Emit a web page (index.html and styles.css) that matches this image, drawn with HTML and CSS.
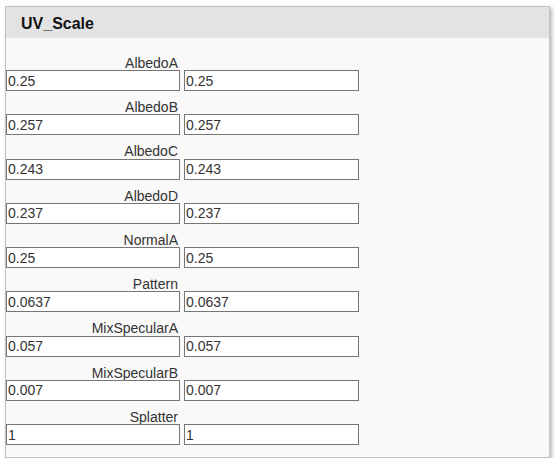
FILE: index.html
```html
<!DOCTYPE html>
<html>
<head>
<meta charset="utf-8">
<link rel="stylesheet" href="styles.css">
</head>
<body>
<div class="panel">
  <div class="panel-header">UV_Scale</div>
  <div class="panel-body">
    <div class="field"><div class="label">AlbedoA</div><div class="inputs"><input class="in1" value="0.25"><input class="in2" value="0.25"></div></div>
    <div class="field"><div class="label">AlbedoB</div><div class="inputs"><input class="in1" value="0.257"><input class="in2" value="0.257"></div></div>
    <div class="field"><div class="label">AlbedoC</div><div class="inputs"><input class="in1" value="0.243"><input class="in2" value="0.243"></div></div>
    <div class="field"><div class="label">AlbedoD</div><div class="inputs"><input class="in1" value="0.237"><input class="in2" value="0.237"></div></div>
    <div class="field"><div class="label">NormalA</div><div class="inputs"><input class="in1" value="0.25"><input class="in2" value="0.25"></div></div>
    <div class="field"><div class="label">Pattern</div><div class="inputs"><input class="in1" value="0.0637"><input class="in2" value="0.0637"></div></div>
    <div class="field"><div class="label">MixSpecularA</div><div class="inputs"><input class="in1" value="0.057"><input class="in2" value="0.057"></div></div>
    <div class="field"><div class="label">MixSpecularB</div><div class="inputs"><input class="in1" value="0.007"><input class="in2" value="0.007"></div></div>
    <div class="field"><div class="label">Splatter</div><div class="inputs"><input class="in1" value="1"><input class="in2" value="1"></div></div>
  </div>
</div>
</body>
</html>
```
FILE: styles.css
```css
html, body {
  margin: 0;
  padding: 0;
  background: #ffffff;
}
body {
  padding: 6px 0 0 5px;
  font-family: "Liberation Sans", Arial, sans-serif;
}
.panel {
  width: 543px;
  height: 450px;
  border: 1px solid #c2c2c2;
  background: #f9f9f9;
  box-shadow: 2px 2px 4px rgba(0, 0, 0, 0.28);
  display: flex;
  flex-direction: column;
}
.panel-header {
  height: 31px;
  box-sizing: border-box;
  background: #e3e3e3;
  padding: 7px 0 0 15px;
  font-size: 16px;
  line-height: 20px;
  font-weight: bold;
  color: #111;
}
.panel-body {
  padding-top: 8.75px;
  display: flex;
  flex-direction: column;
}
.field {
  display: flex;
  flex-direction: column;
}
.label {
  width: 174px;
  box-sizing: border-box;
  height: 23.25px;
  padding: 10px 2px 0 0;
  line-height: 12px;
  font-size: 14px;
  color: #333;
  text-align: right;
}
.inputs {
  display: flex;
  gap: 4px;
}
.inputs input {
  box-sizing: border-box;
  height: 21px;
  margin: 0;
  padding: 0 1px;
  border: 1px solid #767676;
  background: #ffffff;
  font-family: "Liberation Sans", Arial, sans-serif;
  font-size: 14px;
  color: #333;
  outline: none;
}
.in1 {
  width: 174px;
}
.in2 {
  width: 175px;
}
```
